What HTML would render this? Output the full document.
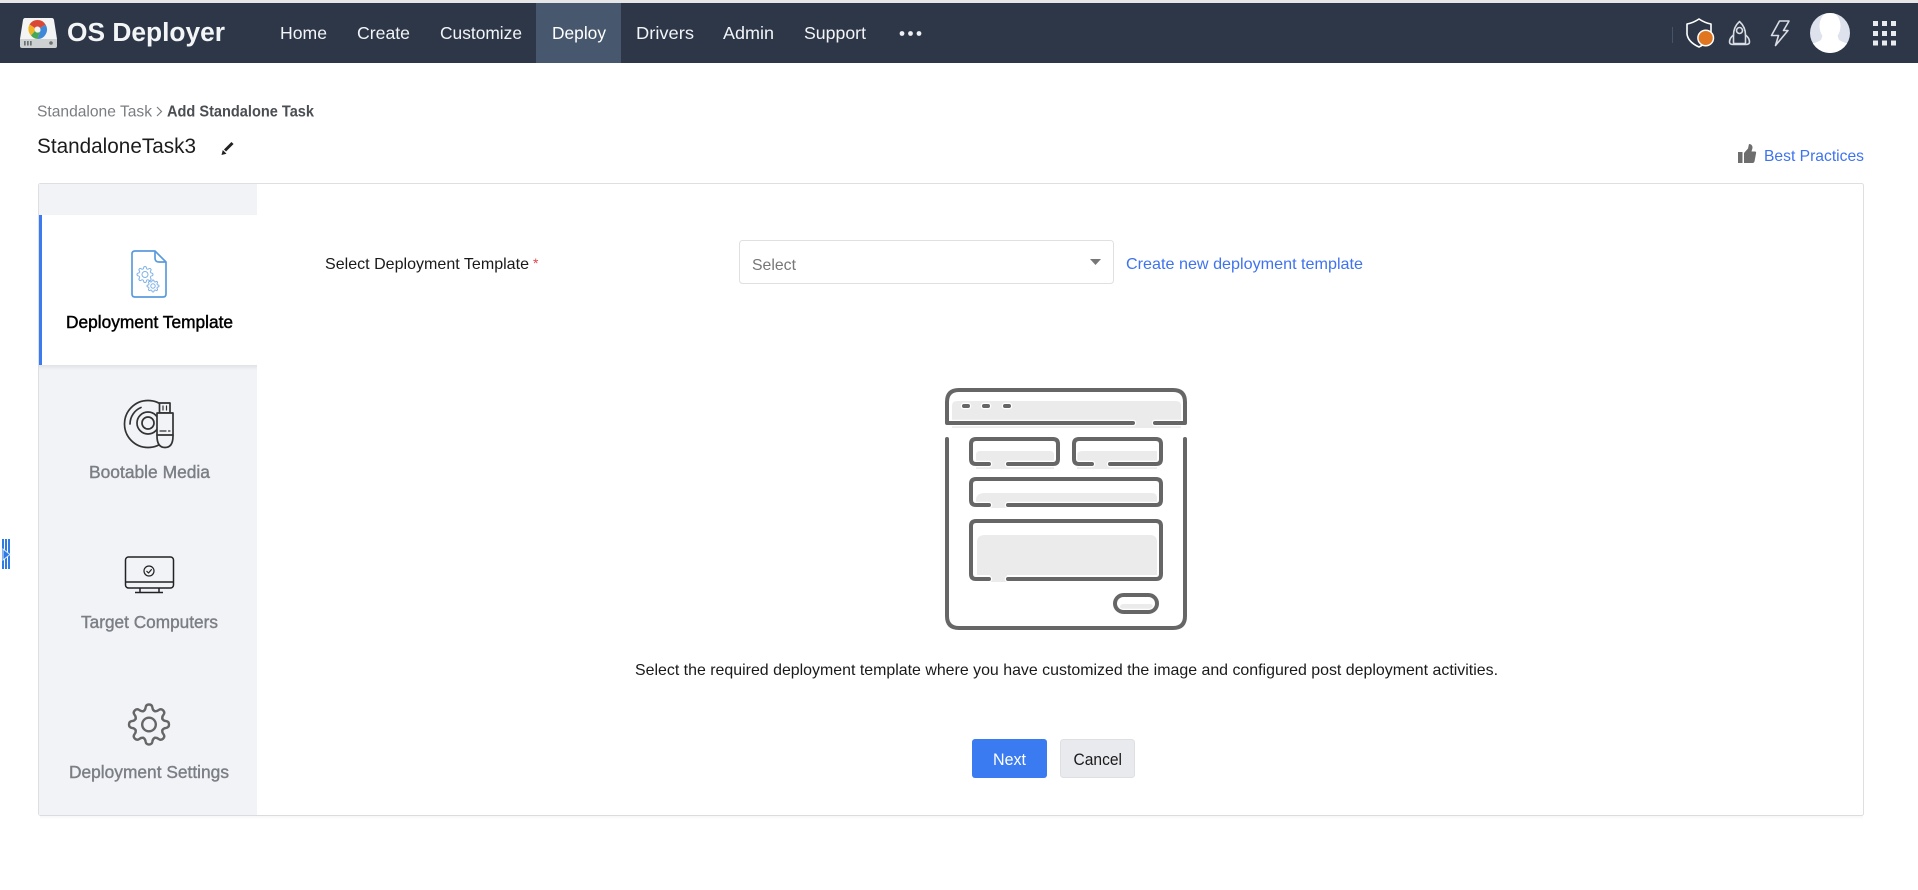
<!DOCTYPE html>
<html lang="en">
<head>
<meta charset="utf-8">
<title>OS Deployer - Add Standalone Task</title>
<style>
html,body{margin:0;padding:0;background:#fff;width:1918px;height:890px;overflow:hidden}
svg{display:block}
text{font-family:"Liberation Sans",sans-serif}
.nav{font-size:17.500px;fill:#f2f4f7}
.side{font-size:17.500px;fill:#7b7f85;stroke:#7b7f85;stroke-width:.4}
.body{font-size:16px;fill:#1a1a1a}
.link{font-size:16px;fill:#3f73ee}
</style>
</head>
<body>
<svg width="1918" height="890" viewBox="0 0 1918 890" xmlns="http://www.w3.org/2000/svg">
<defs>
<clipPath id="av"><circle cx="1830" cy="33" r="20"/></clipPath>
<linearGradient id="sh" x1="0" y1="0" x2="0" y2="1"><stop offset="0" stop-color="#000" stop-opacity=".07"/><stop offset="1" stop-color="#000" stop-opacity="0"/></linearGradient>
<path id="tooth" d="M-5.55-13.4Q-3.6-14.5-3.4-17Q-3-20 0-20Q3-20 3.4-17Q3.6-14.5 5.55-13.4"/>
<g id="gear"><use href="#tooth"/><use href="#tooth" transform="rotate(45)"/><use href="#tooth" transform="rotate(90)"/><use href="#tooth" transform="rotate(135)"/><use href="#tooth" transform="rotate(180)"/><use href="#tooth" transform="rotate(225)"/><use href="#tooth" transform="rotate(270)"/><use href="#tooth" transform="rotate(315)"/></g>
<g id="illo">
<path d="M1133 423H947V402Q947 390 959 390H1173Q1185 390 1185 402V423H1155"/>
<path d="M947 439V616Q947 628 959 628H1173Q1185 628 1185 616V439"/>
<path d="M989 464H976Q971 464 971 459V444Q971 439 976 439H1053Q1058 439 1058 444V459Q1058 464 1053 464H1008"/>
<path d="M1092 464H1079Q1074 464 1074 459V444Q1074 439 1079 439H1156Q1161 439 1161 444V459Q1161 464 1156 464H1110"/>
<path d="M989 505H976Q971 505 971 500V484Q971 479 976 479H1156Q1161 479 1161 484V500Q1161 505 1156 505H1008"/>
<path d="M989 579H976Q971 579 971 574V526Q971 521 976 521H1156Q1161 521 1161 526V574Q1161 579 1156 579H1008"/>
<rect x="1115" y="595" width="42" height="17" rx="8.500"/>
<path d="M964 406H968M984 406H988M1005 406H1009"/>
</g>
</defs>

<!-- header -->
<rect width="1918" height="3" fill="#e6e6e6"/>
<rect y="3" width="1918" height="60" fill="#2d3748"/>
<rect x="536" y="3" width="85" height="60" fill="#47586e"/>

<!-- logo -->
<path d="M25 18H52Q53.500 18 54 20L57 39H20L23 20Q23.500 18 25 18Z" fill="#f4f4f4"/>
<path d="M20 39H57V46Q57 48 55 48H22Q20 48 20 46Z" fill="#cdd1d1"/>
<rect x="24" y="41" width="1.700" height="4.500" fill="#6c7272"/><rect x="27" y="41" width="1.700" height="4.500" fill="#6c7272"/><rect x="30" y="41" width="1.700" height="4.500" fill="#6c7272"/>
<circle cx="51" cy="43" r="1.800" fill="#6c7272"/>
<path d="M37.500 20A9.500 9.500 0 0 1 45.700 24.700L40 28A3 3 0 0 0 34.800 28L29.500 24.500A9.500 9.500 0 0 1 37.500 20Z" fill="#d94836"/>
<path d="M45.700 24.700A9.500 9.500 0 0 1 37.500 39L40.500 30.500A3 3 0 0 0 40 28Z" fill="#3f88d9"/>
<path d="M29.500 24.500L34.800 28A3 3 0 0 0 35 31L31 35.500A9.500 9.500 0 0 1 29.500 24.500Z" fill="#f0b429"/>
<path d="M31 35.500L35 31A3 3 0 0 0 40.500 30.500L37.500 39A9.500 9.500 0 0 1 31 35.500Z" fill="#45a853"/>

<text x="67" y="41" font-size="25.500" font-weight="bold" fill="#f4f5f7" textLength="158" lengthAdjust="spacingAndGlyphs">OS Deployer</text>

<text class="nav" x="280" y="39" textLength="47" lengthAdjust="spacingAndGlyphs">Home</text>
<text class="nav" x="357" y="39" textLength="53" lengthAdjust="spacingAndGlyphs">Create</text>
<text class="nav" x="440" y="39" textLength="82" lengthAdjust="spacingAndGlyphs">Customize</text>
<text class="nav" x="552" y="39" textLength="54" lengthAdjust="spacingAndGlyphs" style="fill:#fff">Deploy</text>
<text class="nav" x="636" y="39" textLength="58" lengthAdjust="spacingAndGlyphs">Drivers</text>
<text class="nav" x="723" y="39" textLength="51" lengthAdjust="spacingAndGlyphs">Admin</text>
<text class="nav" x="804" y="39" textLength="62" lengthAdjust="spacingAndGlyphs">Support</text>
<circle cx="902" cy="33.500" r="2.400" fill="#eef0f3"/><circle cx="910.500" cy="33.500" r="2.400" fill="#eef0f3"/><circle cx="919" cy="33.500" r="2.400" fill="#eef0f3"/>

<!-- header right -->
<rect x="1672" y="27" width="1" height="16" fill="#44546a"/>
<path d="M1699 19Q1693 23 1687 24V34Q1688 42 1699 47Q1709 42 1711 35V24Q1705 23 1699 19Z" fill="none" stroke="#fff" stroke-width="1.600" stroke-linejoin="round"/>
<circle cx="1705.700" cy="38" r="7.800" fill="#e07620" stroke="#fff" stroke-width="1.500"/>
<g fill="none" stroke="#d9dde3" stroke-width="1.600" stroke-linejoin="round" stroke-linecap="round">
<path d="M1739.500 21.500Q1733.500 27 1733.500 35V43.500H1745.500V35Q1745.500 27 1739.500 21.500Z"/>
<circle cx="1739.500" cy="30.500" r="3"/>
<path d="M1733.500 35Q1729.500 38 1729.500 42Q1729.500 44.500 1733.500 44.500H1745.500Q1749.500 44.500 1749.500 42Q1749.500 38 1745.500 35"/>
<path d="M1779.500 21H1789L1783.500 30.500H1788L1775.500 45.500L1778.500 35.500H1771.500Z"/>
</g>
<circle cx="1830" cy="33" r="20" fill="#dde2ec"/>
<g clip-path="url(#av)" fill="#fff">
<ellipse cx="1830" cy="26" rx="10.500" ry="14"/>
<path d="M1823 34H1837L1839 40Q1844 43 1850 44V54H1810V44Q1816 43 1821 40Z"/>
</g>
<g fill="#e9ebee">
<rect x="1873" y="21" width="5" height="5"/><rect x="1882" y="21" width="5" height="5"/><rect x="1891" y="21" width="5" height="5"/>
<rect x="1873" y="31" width="5" height="5"/><rect x="1882" y="31" width="5" height="5"/><rect x="1891" y="31" width="5" height="5"/>
<rect x="1873" y="40.500" width="5" height="5"/><rect x="1882" y="40.500" width="5" height="5"/><rect x="1891" y="40.500" width="5" height="5"/>
</g>

<!-- breadcrumb -->
<text x="37" y="116.500" font-size="16" fill="#7a7d82" textLength="115" lengthAdjust="spacingAndGlyphs">Standalone Task</text>
<path d="M157 107L161.500 111.500L157 116" fill="none" stroke="#7a7d82" stroke-width="1.200"/>
<text x="167" y="116.500" font-size="16" font-weight="bold" fill="#4a4d52" textLength="147" lengthAdjust="spacingAndGlyphs">Add Standalone Task</text>
<text x="37" y="153" font-size="21.500" fill="#1c1c1c" textLength="159" lengthAdjust="spacingAndGlyphs">StandaloneTask3</text>
<path d="M225 150.500L232.500 143" stroke="#222" stroke-width="3" fill="none"/>
<path d="M221.500 155L222.800 150L226.500 153.700Z" fill="#222"/>

<!-- best practices -->
<path d="M1738 152H1742.500V163H1738ZM1744 153L1748 148.500L1749 144Q1752.500 144 1752.500 148L1751.500 151.500H1755Q1756.500 151.500 1756 153.500L1754.500 161.500Q1754 163 1752.500 163H1744Z" fill="#6e6e6e"/>
<text class="link" x="1764" y="161" textLength="100" lengthAdjust="spacingAndGlyphs">Best Practices</text>

<!-- panel -->
<rect x="38.500" y="183.500" width="1825" height="632" rx="2" fill="#fff" stroke="#dedfe2"/>
<rect x="39" y="184" width="218" height="631" fill="#f1f3f7"/>
<rect x="39" y="215" width="218" height="150" fill="#fff"/>
<rect x="39" y="365" width="218" height="5" fill="url(#sh)"/>
<rect x="39" y="215" width="3" height="150" fill="#3a7bf2"/>
<rect x="40" y="815.500" width="1823" height="4" fill="url(#sh)" opacity=".5"/>

<!-- doc icon -->
<g fill="none" stroke="#5b9bdc" stroke-width="1.700" stroke-linejoin="round">
<path d="M155 251H135Q132 251 132 254V294Q132 297 135 297H163Q166 297 166 294V262Z"/>
<path d="M155 251V258Q155 262 159 262H166"/>
</g>
<g fill="none" stroke="#7fb2e5" stroke-width="1">
<g transform="translate(145 274.500) scale(.4)" stroke-width="2.500"><use href="#gear"/></g>
<circle cx="145" cy="274.500" r="3"/>
<g transform="translate(153 286) scale(.3)" stroke-width="3.300"><use href="#gear"/></g>
<circle cx="153" cy="286" r="2.200"/>
</g>
<text x="66" y="328" font-size="17.500" fill="#000" stroke="#000" stroke-width=".45" textLength="167" lengthAdjust="spacingAndGlyphs">Deployment Template</text>

<!-- bootable media icon -->
<g fill="none" stroke="#333" stroke-width="1.700" stroke-linecap="round" stroke-linejoin="round">
<circle cx="148" cy="424" r="23.500"/>
<path d="M130 424A18 18 0 0 1 141 407.500"/>
<circle cx="148" cy="423" r="11"/>
<circle cx="148" cy="423" r="6"/>
<rect x="159.500" y="403" width="10.500" height="10" fill="#f1f3f7"/>
<path d="M163 406V410M166.500 406V410" stroke-width="1.200"/>
<path d="M157 413H173V436Q173 447.500 165 447.500Q157 447.500 157 436Z" fill="#f1f3f7"/>
<path d="M157 435H173"/>
<path d="M160 431H166M168.500 431H170" stroke-width="1.200"/>
</g>
<text class="side" x="89" y="478" textLength="121" lengthAdjust="spacingAndGlyphs">Bootable Media</text>

<!-- monitor icon -->
<g fill="none" stroke="#222" stroke-width="1.500" stroke-linejoin="round">
<rect x="125.500" y="557" width="48" height="31" rx="3"/>
<path d="M125.500 582H173.500"/>
<path d="M140 588V592M159 588V592M135 592.500H163"/>
<circle cx="149" cy="571" r="5" stroke-width="1.200"/>
<path d="M146.500 571L148.500 573L151.700 569.200" stroke-width="1.200"/>
</g>
<text class="side" x="81" y="628" textLength="137" lengthAdjust="spacingAndGlyphs">Target Computers</text>

<!-- settings icon -->
<g fill="none" stroke="#666" stroke-width="2.400" stroke-linejoin="round" stroke-linecap="round" transform="translate(149 724.500)">
<use href="#gear"/>
<circle r="6.800"/>
</g>
<text class="side" x="69" y="778" textLength="160" lengthAdjust="spacingAndGlyphs">Deployment Settings</text>

<!-- form row -->
<text class="body" x="325" y="269" textLength="204" lengthAdjust="spacingAndGlyphs">Select Deployment Template</text>
<text x="533" y="268" font-size="14" fill="#e0454f">*</text>
<rect x="739.500" y="240.500" width="374" height="43" rx="3" fill="#fff" stroke="#dfe0e2"/>
<text x="752" y="270" font-size="16" fill="#777" textLength="44" lengthAdjust="spacingAndGlyphs">Select</text>
<path d="M1090 259H1101L1095.500 265Z" fill="#777"/>
<text class="link" x="1126" y="269" textLength="237" lengthAdjust="spacingAndGlyphs">Create new deployment template</text>

<!-- illustration -->
<g fill="#ebebeb">
<path d="M957 401H1176Q1181 401 1181 406V428H952V406Q952 401 957 401Z"/>
<path d="M980 451H1050Q1054 451 1054 455V469H976V455Q976 451 980 451Z"/>
<path d="M1083 451H1157V469H1077V455Q1077 451 1083 451Z"/>
<path d="M985 493H1152Q1157 493 1157 498V503H1007V508H990V503H976V500Q976 493 985 493Z"/>
<path d="M985 535H1150Q1157 535 1157 542V575H1007V582H990V575H977V542Q977 535 985 535Z"/>
<rect x="1120" y="604" width="33" height="6" rx="3"/>
</g>
<g fill="none" stroke="#fff" stroke-width="6.500" stroke-linecap="round" stroke-linejoin="round"><use href="#illo"/></g>
<g fill="none" stroke="#666" stroke-width="4" stroke-linecap="round" stroke-linejoin="round"><use href="#illo"/></g>

<text class="body" x="635" y="675" textLength="863" lengthAdjust="spacingAndGlyphs">Select the required deployment template where you have customized the image and configured post deployment activities.</text>

<!-- buttons -->
<rect x="972" y="739" width="75" height="39" rx="3" fill="#3a7bf2"/>
<text x="993" y="765" font-size="16.500" fill="#fff" textLength="33" lengthAdjust="spacingAndGlyphs">Next</text>
<rect x="1060.500" y="739.500" width="74" height="38" rx="3" fill="#e9eaee" stroke="#dedfe3"/>
<text x="1073.500" y="765" font-size="16.500" fill="#1a1a1a" textLength="48.500" lengthAdjust="spacingAndGlyphs">Cancel</text>

<!-- left toggle -->
<rect x="2" y="539" width="2" height="30" fill="#2f7be6"/>
<rect x="5" y="539" width="2" height="30" fill="#2f7be6"/>
<rect x="8" y="539" width="2" height="30" fill="#2f7be6"/>
<path d="M3 549V560L10 554.500Z" fill="#2f7be6" stroke="#dcebfb" stroke-width="1"/>
</svg>
</body>
</html>
